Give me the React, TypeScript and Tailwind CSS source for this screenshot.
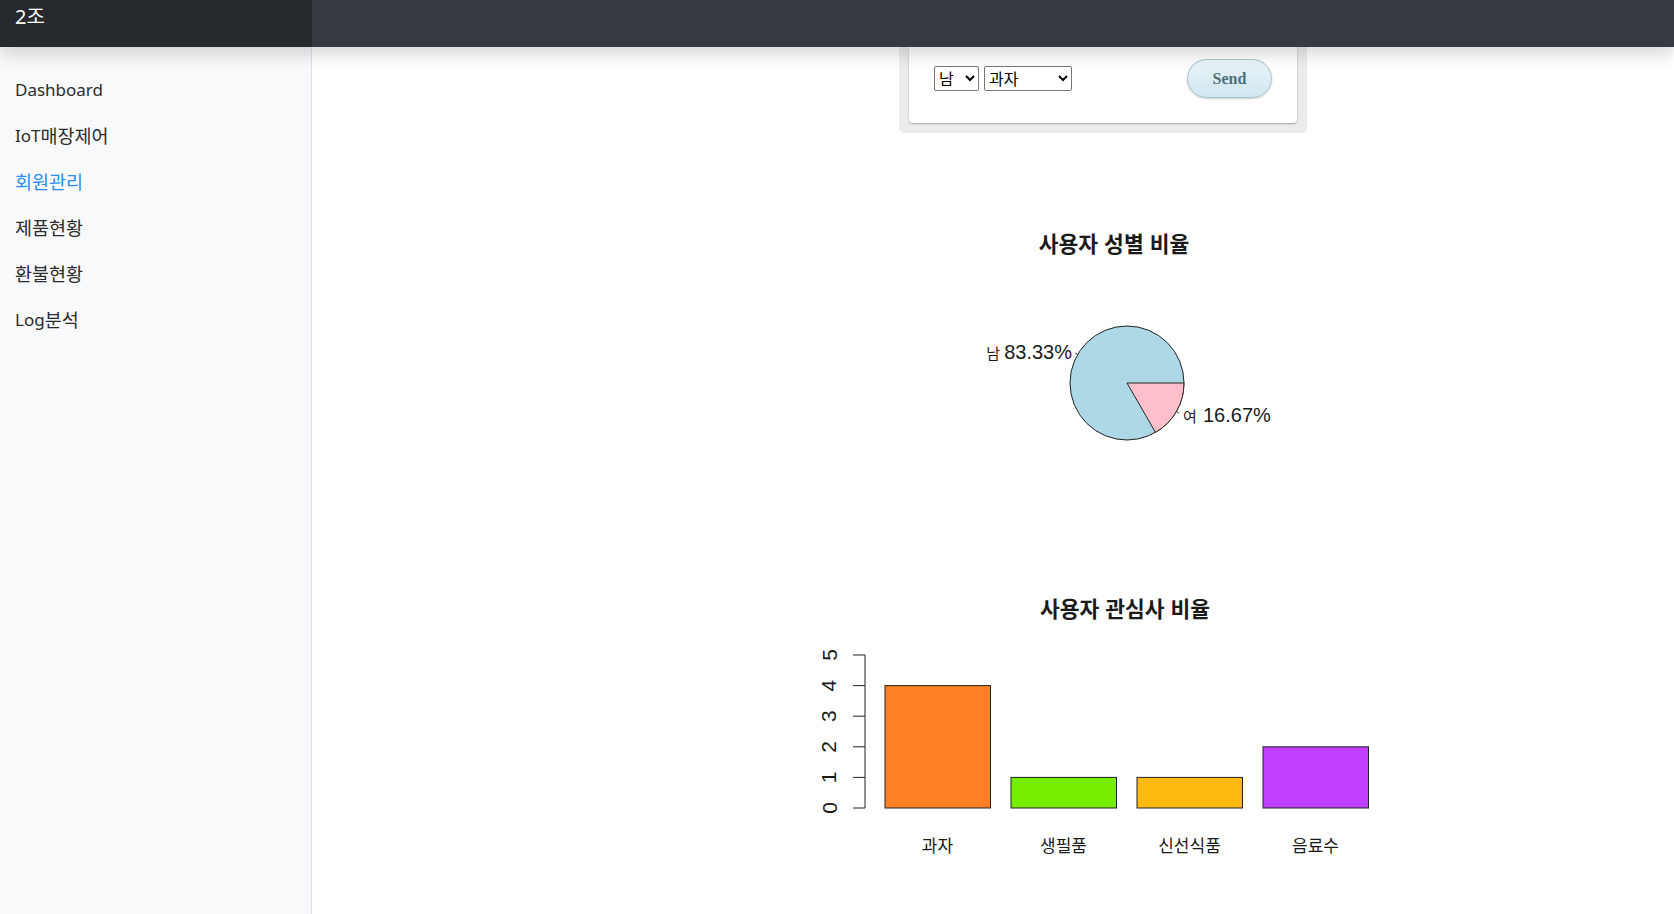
const navItems = [
  { label: "Dashboard", active: false },
  { label: "IoT매장제어", active: false },
  { label: "회원관리", active: true },
  { label: "제품현황", active: false },
  { label: "환불현황", active: false },
  { label: "Log분석", active: false },
];

const bars = [
  { label: "과자", value: 4, color: "#FF7F24" },
  { label: "생필품", value: 1, color: "#76EE00" },
  { label: "신선식품", value: 1, color: "#FFB90F" },
  { label: "음료수", value: 2, color: "#BF3EFF" },
];

const chartFont = '"Liberation Sans", "Noto Sans CJK KR", sans-serif';

// hangul runs get a slightly bigger size so they match the original gothic font
function NavLabel({ text }: { text: string }) {
  return (
    <>
      {text.split(/([가-힣]+)/).filter(Boolean).map((part, i) =>
        /[가-힣]/.test(part) ? (
          <span key={i} className="text-[18.5px]">{part}</span>
        ) : (
          <span key={i}>{part}</span>
        )
      )}
    </>
  );
}

function GenderPie() {
  return (
    <svg width={640} height={427} style={{ fontFamily: chartFont }}>
      <text x={334} y={119} textAnchor="middle" fontSize={21.5} fontWeight="bold" fill="#1a1a1a">
        사용자 성별 비율
      </text>
      <circle cx={347} cy={250} r={57} fill="#ADD8E6" stroke="#222" strokeWidth={1} />
      <path d="M347 250 L404 250 A57 57 0 0 1 375.5 299.4 Z" fill="#FFC0CB" stroke="#222" strokeWidth={1} />
      <line x1={297.6} y1={221.5} x2={295.2} y2={220.1} stroke="#222" />
      <line x1={396.4} y1={278.5} x2={398.8} y2={279.9} stroke="#222" />
      <text x={292} y={226} textAnchor="end" fill="#1a1a1a" fontSize={20}>
        <tspan fontSize={15}>남 </tspan>83.33%
      </text>
      <text x={403} y={289} fill="#1a1a1a" fontSize={20}>
        <tspan fontSize={15}>여 </tspan>
        <tspan dx={2}>16.67%</tspan>
      </text>
    </svg>
  );
}

function InterestBar() {
  const base = 248;
  const unit = 30.6;
  return (
    <svg width={640} height={320} style={{ fontFamily: chartFont }}>
      <text x={345} y={57} textAnchor="middle" fontSize={21.5} fontWeight="bold" fill="#1a1a1a">
        사용자 관심사 비율
      </text>
      <line x1={85} y1={base} x2={85} y2={base - 5 * unit} stroke="#222" />
      {[0, 1, 2, 3, 4, 5].map((i) => (
        <g key={i}>
          <line x1={73} y1={base - i * unit} x2={85} y2={base - i * unit} stroke="#222" />
          <text
            x={49}
            y={base - i * unit}
            fontSize={21}
            fill="#1a1a1a"
            textAnchor="middle"
            dominantBaseline="central"
            transform={`rotate(-90 49 ${base - i * unit})`}
          >
            {i}
          </text>
        </g>
      ))}
      {bars.map((b, i) => {
        const x = 105 + i * 126;
        return (
          <g key={b.label}>
            <rect x={x} y={base - b.value * unit} width={105.5} height={b.value * unit} fill={b.color} stroke="#222" strokeWidth={1} />
            <text x={x + 52.5} y={292} textAnchor="middle" fontSize={17} fill="#1a1a1a">
              {b.label}
            </text>
          </g>
        );
      })}
    </svg>
  );
}

export default function App() {
  return (
    <div className="min-h-screen flex flex-col bg-white" style={{ fontFamily: '"Noto Sans", "Noto Sans CJK KR", sans-serif' }}>
      <header className="relative z-10 flex h-[47px] shrink-0 shadow-[0_8px_16px_rgba(0,0,0,0.15)]">
        <div className="w-[312px] bg-[#26292e] px-[15px] pt-[3px] text-[20px] text-white leading-[28px]">2조</div>
        <div className="flex-1 bg-[#353a42]" />
      </header>
      <div className="flex flex-1">
        <nav className="w-[312px] shrink-0 border-r border-[#dee2e6] bg-[#f8f9fa] pt-[20px]">
          {navItems.map((item) => (
            <div
              key={item.label}
              className={`flex items-center h-[46px] px-[15px] text-[17px] leading-[24px] ${item.active ? "text-[#2a8cf5]" : "text-[#2b2b2b]"}`}
            >
              <NavLabel text={item.label} />
            </div>
          ))}
        </nav>
        <main className="flex-1 flex flex-col pl-[468px]">
          <div className="ml-[119px] w-[408px] rounded-b-[5px] bg-[#ececec] px-[10px] pb-[10px]">
            <div className="flex items-center justify-between rounded-b-[4px] bg-white px-[25px] pt-[12px] pb-[25px] shadow-[0_1px_2px_rgba(0,0,0,0.3)]">
              <div className="flex items-center gap-[5px]">
                <select className="h-[25px] w-[45px] rounded-[2px] border border-[#767676] bg-white text-[16px] text-black">
                  <option>남</option>
                  <option>여</option>
                </select>
                <select className="h-[25px] w-[88px] rounded-[2px] border border-[#767676] bg-white text-[16px] text-black">
                  <option>과자</option>
                  <option>생필품</option>
                  <option>신선식품</option>
                  <option>음료수</option>
                </select>
              </div>
              <button
                className="h-[39px] w-[85px] rounded-full border border-[#a6c4cc] bg-gradient-to-b from-[#eaf4f8] to-[#d0e6ee] text-[16px] font-bold text-[#4d6f79] shadow-[0_1px_2px_rgba(0,0,0,0.2)]"
                style={{ fontFamily: '"Liberation Serif", serif' }}
              >
                Send
              </button>
            </div>
          </div>
          <GenderPie />
          <InterestBar />
        </main>
      </div>
    </div>
  );
}
